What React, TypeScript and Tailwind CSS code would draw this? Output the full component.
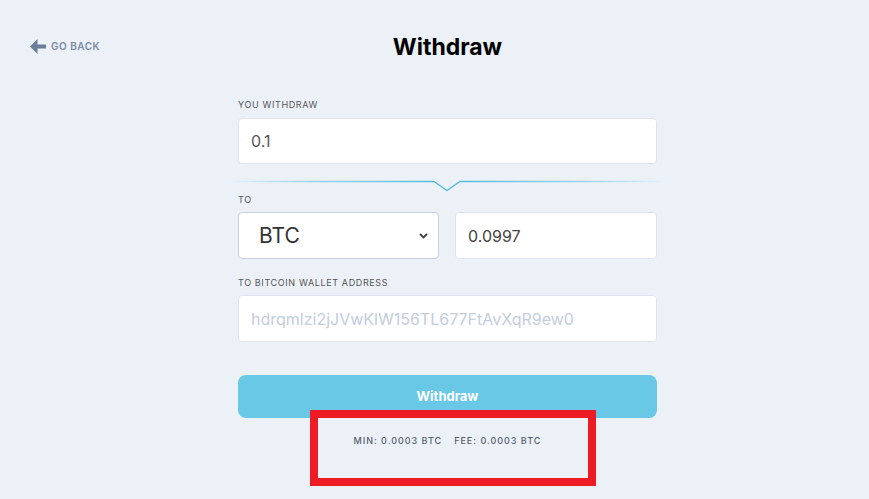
export default function App() {
  return (
    <div className="relative min-h-[499px] w-full bg-[#ecf1f8] font-['Inter',sans-serif] text-[#333]">
      <div className="flex pt-[34px]">
        <div className="w-[238px] pl-[30px] pt-[5px]">
          <button className="flex items-center gap-[5px] text-[#7b8ba4]">
            <svg width="16" height="15" viewBox="0 0 16 15" fill="#6c7f99">
              <path d="M0 7.5 L7.5 0 L7.5 5.5 L16 5.5 L16 9.5 L7.5 9.5 L7.5 15 Z" />
            </svg>
            <span className="text-[10px] font-semibold tracking-[0.05em]">GO BACK</span>
          </button>
        </div>
        <h1 className="w-[419px] text-center text-[23px] font-bold leading-[26px] text-black">Withdraw</h1>
      </div>

      <div className="ml-[238px] w-[419px] pt-[39px]">
        <label className="block text-[9px] leading-[12px] tracking-[0.07em] text-[#555]">YOU WITHDRAW</label>
        <div className="mt-[7px] flex h-[46px] items-center rounded-[4px] border border-[#dfe5ee] bg-white px-[12px] text-[16px] text-[#555]">
          0.1
        </div>

        <svg className="-ml-[11px] mt-[16px] block" width="440" height="12" viewBox="0 0 440 12" fill="none">
          <defs>
            <linearGradient id="dl" x1="0" y1="0" x2="440" y2="0" gradientUnits="userSpaceOnUse">
              <stop offset="0" stopColor="#5cc0e0" stopOpacity="0" />
              <stop offset="0.2" stopColor="#5cc0e0" stopOpacity="0.6" />
              <stop offset="0.5" stopColor="#4cb8dc" />
              <stop offset="0.8" stopColor="#5cc0e0" stopOpacity="0.6" />
              <stop offset="1" stopColor="#5cc0e0" stopOpacity="0" />
            </linearGradient>
          </defs>
          <path d="M0 1.5 H207 L220 10.5 L233 1.5 H440" stroke="url(#dl)" strokeWidth="1.3" />
        </svg>

        <label className="mt-[2px] block text-[9px] leading-[12px] tracking-[0.07em] text-[#555]">TO</label>
        <div className="mt-[6px] flex gap-[16px]">
          <div className="flex h-[47px] w-[201px] items-center justify-between rounded-[4px] border border-[#c9d0da] bg-white pl-[20px] pr-[10px]">
            <span className="text-[21px] text-[#333]">BTC</span>
            <svg width="9" height="6" viewBox="0 0 9 6" fill="none" stroke="#444" strokeWidth="1.8">
              <path d="M1 1 L4.5 4.5 L8 1" />
            </svg>
          </div>
          <div className="flex h-[47px] flex-1 items-center rounded-[4px] border border-[#dfe5ee] bg-white px-[12px] text-[16px] text-[#444]">
            0.0997
          </div>
        </div>

        <label className="mt-[18px] block text-[9px] leading-[12px] tracking-[0.07em] text-[#555]">TO BITCOIN WALLET ADDRESS</label>
        <div className="mt-[6px] flex h-[47px] items-center rounded-[4px] border border-[#dfe5ee] bg-white px-[12px] text-[16px] text-[#c2cde0]">
          hdrqmlzi2jJVwKlW156TL677FtAvXqR9ew0
        </div>

        <button className="mt-[33px] flex h-[43px] w-full items-center justify-center rounded-[8px] bg-[#68c8e6] text-[13px] font-bold text-white">
          Withdraw
        </button>

        <div className="mt-[17px] flex justify-center gap-[12px] text-[9px] font-medium leading-[12px] tracking-[0.11em] text-[#556070]">
          <span>MIN: 0.0003 BTC</span>
          <span>FEE: 0.0003 BTC</span>
        </div>
      </div>

      <div className="pointer-events-none absolute left-[310px] top-[410px] h-[76px] w-[286px] border-[8px] border-[#ed1c24]" />
    </div>
  );
}
